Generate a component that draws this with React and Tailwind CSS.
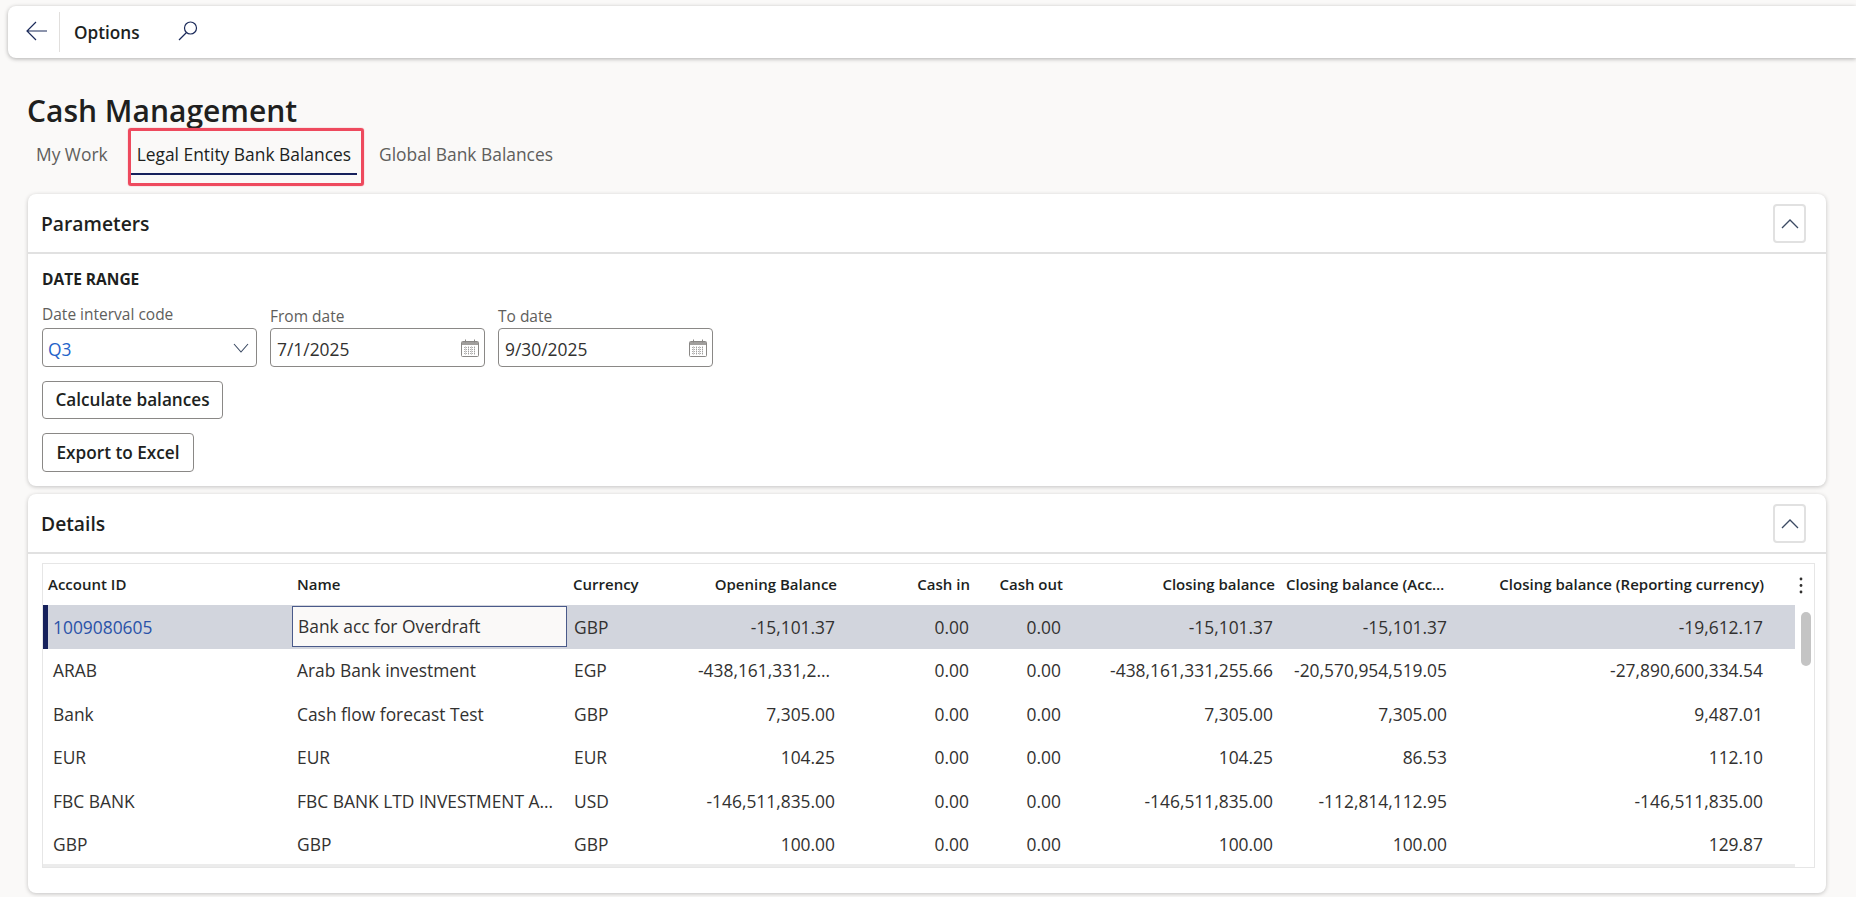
import React from 'react';

const rows = [
    ['1009080605', 'Bank acc for Overdraft', 'GBP', '-15,101.37', '0.00', '0.00', '-15,101.37', '-15,101.37', '-19,612.17'],
    ['ARAB', 'Arab Bank investment', 'EGP', '-438,161,331,255.66', '0.00', '0.00', '-438,161,331,255.66', '-20,570,954,519.05', '-27,890,600,334.54'],
    ['Bank', 'Cash flow forecast Test', 'GBP', '7,305.00', '0.00', '0.00', '7,305.00', '7,305.00', '9,487.01'],
    ['EUR', 'EUR', 'EUR', '104.25', '0.00', '0.00', '104.25', '86.53', '112.10'],
    ['FBC BANK', 'FBC BANK LTD INVESTMENT ACCOUNT', 'USD', '-146,511,835.00', '0.00', '0.00', '-146,511,835.00', '-112,814,112.95', '-146,511,835.00'],
    ['GBP', 'GBP', 'GBP', '100.00', '0.00', '0.00', '100.00', '100.00', '129.87'],
];

const gridCols = 'grid grid-cols-[249px_275px_125px_149px_135px_92px_212px_173px_317px]';

const CalendarIcon = () => (
    <svg width="20" height="20" viewBox="0 0 20 20" fill="none" stroke="#8a8886" strokeWidth="1">
        <rect x="1.5" y="3.5" width="17" height="15" rx="1" />
        <path d="M2 4h16v3H2z" fill="#a19f9d" stroke="none" />
        <path d="M5.5 1.5v3M14.5 1.5v3" />
        <path d="M4 9.5h12M4 11.5h12M4 13.5h12M4 15.5h12M5.5 8.5v8.5M8.5 8.5v8.5M11.5 8.5v8.5M14.5 8.5v8.5" strokeWidth="0.7" strokeDasharray="1 1" />
    </svg>
);

const CollapseButton = () => (
    <button className="w-[33px] h-[39px] flex items-center justify-center border-2 border-[#e1e1e1] rounded-[4px] bg-white">
        <svg width="18" height="11" viewBox="0 0 18 11" fill="none" stroke="#3b4a63" strokeWidth="1.3">
            <path d="M1 10l8-8 8 8" />
        </svg>
    </button>
);

const DateField = ({ label, value }) => (
    <div>
        <div className="text-[15.5px] leading-[20px] text-[#605e5c] mb-[2px]">{label}</div>
        <div className="w-[215px] h-[39px] flex items-center justify-between pl-[6px] pr-[4px] bg-white border border-[#8a8886] rounded-[4px] text-[17.4px] text-[#323130]">
            <span className="pt-[3px]">{value}</span>
            <CalendarIcon />
        </div>
    </div>
);

const Card = ({ title, children }) => (
    <div className="w-[1798px] ml-7 bg-white rounded-[8px] shadow-[0_1px_4px_rgba(0,0,0,0.22)]">
        <div className="h-[60px] flex items-center justify-between pl-[13px] pr-[20px] border-b-2 border-[#e1e1e1]">
            <h2 className="pt-[3px] text-[19.3px] font-semibold text-[#201f1e]">{title}</h2>
            <CollapseButton />
        </div>
        {children}
    </div>
);

export default function App() {
    return (
        <div className="h-[897px] overflow-hidden bg-[#faf9f8] pt-[6px] font-['Open_Sans',sans-serif] text-[#323130]">
            {/* top command bar */}
            <div className="ml-2 h-[52px] flex items-center bg-white rounded-l-[8px] shadow-[0_1px_4px_rgba(0,0,0,0.3)]">
                <button className="w-[52px] h-[40px] flex items-center justify-center border-r border-[#e1dfdd]">
                    <svg className="ml-[6px] -mt-[2px]" width="22" height="20" viewBox="0 0 22 20" fill="none" stroke="#1b2a5a" strokeWidth="1.2">
                        <path d="M21 10H1M10 1l-9 9 9 9" />
                    </svg>
                </button>
                <span className="ml-[14px] pt-[2px] text-[17.2px] font-semibold text-[#201f1e]">Options</span>
                <svg className="ml-[38px] -mt-[3px]" width="20" height="20" viewBox="0 0 20 20" fill="none" stroke="#1b2a5a" strokeWidth="1.2">
                    <circle cx="12.5" cy="7" r="6" />
                    <path d="M8.5 11.5L1 19" />
                </svg>
            </div>

            <h1 className="ml-[27px] mt-[33px] text-[30px] leading-[40px] font-semibold text-[#201f1e]">Cash Management</h1>

            {/* tabs */}
            <div className="ml-[30px] flex text-[17.4px] leading-[24px] text-[#605e5c]">
                <div className="mr-[17px] px-[6px] pt-[11px] pb-[7px]">My Work</div>
                <div className="relative mr-[16px] px-[6px] pt-[11px] pb-[7px] border-b-[2.5px] border-[#16215c] text-[#201f1e]">
                    Legal Entity Bank Balances
                    <div className="absolute -left-[3px] -right-[7px] -top-[3px] -bottom-[13px] border-[3px] border-[#ee4a5e] rounded-[3px] shadow-[0_0_1px_#ee4a5e]" />
                </div>
                <div className="px-[6px] pt-[11px] pb-[7px]">Global Bank Balances</div>
            </div>

            <div className="mt-[19px]">
                <Card title="Parameters">
                    <div className="pl-[14px] pt-[15px] pb-[14px]">
                        <div className="text-[15.5px] leading-[20px] font-bold text-[#201f1e] mb-[15px]">DATE RANGE</div>
                        <div className="flex items-end gap-[13px]">
                            <div>
                                <div className="text-[15.5px] leading-[20px] text-[#605e5c] mb-[4px]">Date interval code</div>
                                <div className="w-[215px] h-[39px] flex items-center justify-between pl-[5px] pr-[7px] bg-white border border-[#8a8886] rounded-[4px] text-[17.4px] text-[#2563c9]">
                                    <span className="pt-[3px]">Q3</span>
                                    <svg width="16" height="10" viewBox="0 0 16 10" fill="none" stroke="#3b4a63" strokeWidth="1.1">
                                        <path d="M1 1l7 8 7-8" />
                                    </svg>
                                </div>
                            </div>
                            <DateField label="From date" value="7/1/2025" />
                            <DateField label="To date" value="9/30/2025" />
                        </div>
                        <button className="mt-[14px] block w-[181px] h-[38px] bg-white border border-[#8a8886] rounded-[4px] text-[17.2px] font-semibold text-[#201f1e]">Calculate balances</button>
                        <button className="mt-[14px] block w-[152px] h-[39px] bg-white border border-[#8a8886] rounded-[4px] text-[17.2px] font-semibold text-[#201f1e]">Export to Excel</button>
                    </div>
                </Card>
            </div>

            <div className="mt-2">
                <Card title="Details">
                    <div className="pl-[14px] pr-[11px] pt-[9px] pb-[25px]">
                        <div className="relative h-[305px] overflow-hidden border border-[#e6e6e6]">
                            {/* header row */}
                            <div className="relative h-[41px] text-[15px] font-semibold text-[#201f1e]">
                                <div className={`${gridCols} h-full items-center`}>
                                    <div className="pl-[5px]">Account ID</div>
                                    <div className="pl-[5px]">Name</div>
                                    <div className="pl-[6px]">Currency</div>
                                    <div className="pr-[4px] text-right">Opening Balance</div>
                                    <div className="pr-[6px] text-right">Cash in</div>
                                    <div className="pr-[5px] text-right">Cash out</div>
                                    <div className="pr-[5px] text-right">Closing balance</div>
                                    <div className="pl-[6px] pr-[6px] text-right truncate">Closing balance (Account currency)</div>
                                    <div className="pr-[6px] text-right">Closing balance (Reporting currency)</div>
                                </div>
                                <svg className="absolute right-[11px] top-[13px]" width="4" height="17" viewBox="0 0 4 17" fill="#323130">
                                    <circle cx="2" cy="2" r="1.4" />
                                    <circle cx="2" cy="8.5" r="1.4" />
                                    <circle cx="2" cy="15" r="1.4" />
                                </svg>
                            </div>
                            {/* body */}
                            <div className="flex text-[17.4px]">
                                <div className="w-[1752px]">
                                    {rows.map((row, i) => (
                                        <div key={row[0]} className={`relative ${gridCols} h-[43.5px] items-center ${i === 0 ? 'bg-[#d2d5dd]' : ''}`}>
                                            {i === 0 && <div className="absolute left-0 top-0 bottom-0 w-[5px] bg-[#16215c]" />}
                                            <div className={`pl-[10px] ${i === 0 ? 'text-[#2a52a8]' : ''}`}>{row[0]}</div>
                                            <div className={`px-[5px] truncate ${i === 0 ? 'h-[41px] leading-[39px] bg-[#faf9f8] border border-[#4a5a8a]' : ''}`}>{row[1]}</div>
                                            <div className="pl-[7px]">{row[2]}</div>
                                            <div className="pl-[6px] pr-[6px] text-right truncate">{row[3]}</div>
                                            <div className="pr-[7px] text-right">{row[4]}</div>
                                            <div className="pr-[7px] text-right">{row[5]}</div>
                                            <div className="pr-[7px] text-right">{row[6]}</div>
                                            <div className="pr-[6px] text-right">{row[7]}</div>
                                            <div className="pr-[7px] text-right">{row[8]}</div>
                                        </div>
                                    ))}
                                </div>
                                <div className="pl-[6px] pt-[7px]">
                                    <div className="w-[10px] h-[54px] rounded-[5px] bg-[#c4c4c4]" />
                                </div>
                            </div>
                            {/* horizontal scrollbar track */}
                            <div className="absolute left-0 bottom-0 w-[1752px] h-[3px] bg-[#ececec]" />
                        </div>
                    </div>
                </Card>
            </div>
        </div>
    );
}
